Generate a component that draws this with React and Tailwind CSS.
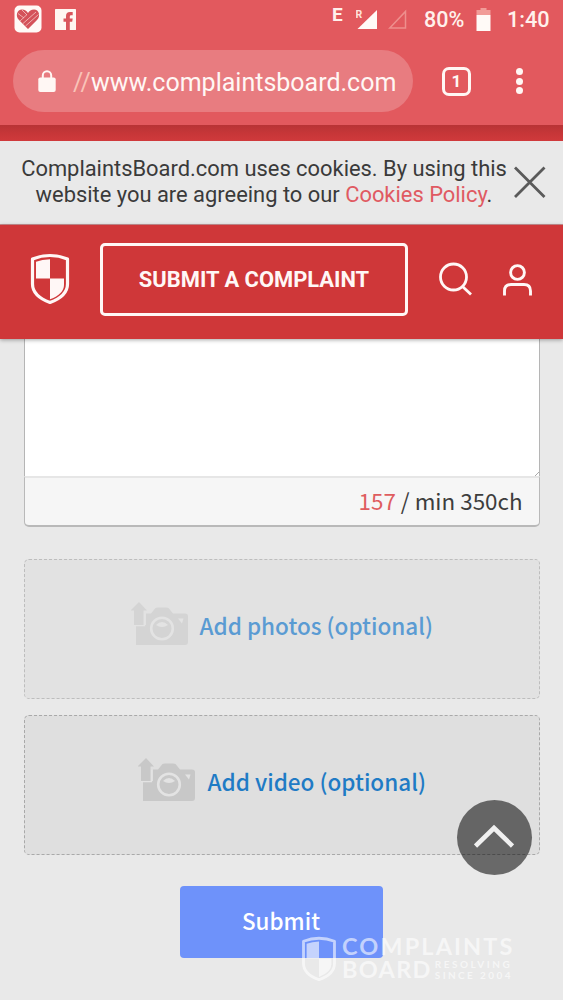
import React from 'react';

const Shield = ({ className }) => (
  <svg className={className} viewBox="0 0 40 52" fill="none">
    <path d="M2.500 6Q20 -1 37.500 6V31Q37.500 43 20 49.500Q2.500 43 2.500 31Z" stroke="currentColor" strokeWidth="3.200" strokeLinejoin="round" />
    <path d="M6 8.800Q12 6.500 20 6.300V25.500H6Z" fill="currentColor" />
    <path d="M20 25.500H34V32Q34 41 20 46.300Z" fill="currentColor" />
  </svg>
);

const StatusBar = () => (
  <div className="flex h-[38px] items-center text-[#fff1ec]">
    <svg className="ml-3.5 h-7 w-7" viewBox="0 0 28 28">
      <rect x="0.5" y="0.5" width="27" height="27" rx="5" fill="#fffaf7" />
      <path d="M14 24L5 15C1 11 3 4.500 8 4.500C11 4.500 12.500 6 14 8C15.500 6 17 4.500 20 4.500C25 4.500 27 11 23 15Z" fill="#d4525a" />
      <path d="M6 16L13 9.500M9 18.500L22 7M11.500 21L24.500 9.500M4 8.500L10 13M8 5L13 10" stroke="#f6c9c6" strokeWidth="0.8" />
    </svg>
    <svg className="ml-[13px] h-[21px] w-[21px]" viewBox="0 0 21 21">
      <rect width="21" height="21" rx="0.6" fill="#fff7f2" />
      <path d="M17 3H15Q11 3 11 7V9.500H8.500V12.700H11V21H14.800V12.700H17.200L17.700 9.500H14.800V7.500Q14.800 6.200 16 6.200H17.700V3Z" fill="#d9555b" />
    </svg>
    <span className="-mt-2.5 ml-[256px] w-[24px] text-[19px] font-bold leading-none">E</span>
    <svg className="h-[22px] w-[22px]" viewBox="0 0 22 22">
      <text x="-0.5" y="9.500" fontSize="10.500" fontWeight="700" fill="#ffe3dc">R</text>
      <path d="M21 2V21H1.500Z" fill="#fffaf7" />
    </svg>
    <svg className="ml-[10px] h-[22px] w-5" viewBox="0 0 20 22">
      <path d="M17.500 3.500V20H1.800Z" fill="none" stroke="#ee8f8d" strokeWidth="1.500" />
    </svg>
    <span className="ml-4 mt-0.5 w-[42px] whitespace-nowrap text-[21.5px] font-medium leading-none">80%</span>
    <svg className="ml-[10px] h-[23px] w-[15px]" viewBox="0 0 15 23">
      <path d="M4.500 0H10.500V2H14.500V7H0.500V2H4.500Z" fill="#f19c98" />
      <rect x="0.5" y="7" width="14" height="16" fill="#fffaf7" />
    </svg>
    <span className="ml-[16px] mt-0.5 whitespace-nowrap text-[21.7px] font-medium leading-none">1:40</span>
  </div>
);

const BrowserBar = () => (
  <div className="flex h-[87px] items-center pb-[1px] text-[#fff7f4]">
    <div className="ml-[13px] flex h-[62px] w-[400px] items-center rounded-full bg-[#e87c80] pl-[25px]">
      <svg className="h-[22px] w-[18px]" viewBox="0 0 18 22">
        <rect x="0.3" y="7.500" width="17.400" height="14.500" rx="2" fill="currentColor" />
        <path d="M4.800 9V5.500A4.200 4.200 0 0 1 13.200 5.500V9" fill="none" stroke="currentColor" strokeWidth="2" />
      </svg>
      <span className="ml-[17px] mt-0.5 whitespace-nowrap text-[25px] leading-none">
        <span className="text-[#f9c3b8]">//</span>www.complaintsboard.com
      </span>
    </div>
    <div className="ml-[29px] flex h-[29px] w-[29px] items-center justify-center rounded-[7px] border-[3px] border-[#fff7f4] text-[17px] font-bold leading-none">
      1
    </div>
    <div className="ml-[44.5px] flex flex-col gap-[2.5px]">
      <span className="h-[7px] w-[7px] rounded-full bg-[#fff7f4]" />
      <span className="h-[7px] w-[7px] rounded-full bg-[#fff7f4]" />
      <span className="h-[7px] w-[7px] rounded-full bg-[#fff7f4]" />
    </div>
  </div>
);

const CookieNotice = () => (
  <div className="flex h-[84px] border-b border-[#c98f91] bg-[#e9e9e9] pt-[15px]">
    <p className="ml-[21px] w-[486px] whitespace-nowrap text-center text-[21.9px] leading-[26px] text-[#3a3a3a]">
      ComplaintsBoard.com uses cookies. By using this
      <br />
      website you are agreeing to our <span className="text-[#e05a62]">Cookies Policy</span>.
    </p>
    <svg className="ml-[7px] mt-[10px] h-8 w-8" viewBox="0 0 32 32">
      <path d="M1 1.500L30.500 31M30.500 1.500L1 31" stroke="#5a5a5a" strokeWidth="2.800" />
    </svg>
  </div>
);

const SiteHeader = () => (
  <header className="relative flex h-[114px] items-start bg-[#cf3739] text-[#fff7f6] shadow-[0_1px_4px_rgba(0,0,0,0.35)]">
    <Shield className="ml-[30px] mt-[28px] h-[52px] w-10" />
    <button className="ml-[30px] mt-[18px] h-[73px] w-[308px] whitespace-nowrap rounded-[5px] border-[3px] border-[#fff7f6] text-[21.9px] font-bold leading-none">
      SUBMIT A COMPLAINT
    </button>
    <svg className="ml-[30px] mt-[36px] h-9 w-9" viewBox="0 0 36 36" fill="none" stroke="currentColor" strokeWidth="2.800">
      <circle cx="15.500" cy="16" r="13" />
      <path d="M24.500 25.500L33 33.500" />
    </svg>
    <svg className="ml-[28px] mt-[38px] h-[34px] w-8" viewBox="0 0 32 34" fill="none" stroke="currentColor" strokeWidth="2.900">
      <circle cx="15.500" cy="9.500" r="6.900" />
      <path d="M2.500 32.500V28Q2.500 21.500 9 21.500H22Q28.500 21.500 28.500 28V32.500" />
    </svg>
  </header>
);

const CameraIcon = () => (
  <svg className="h-[46px] w-[60px]" viewBox="0 0 60 46">
    <path d="M5 22V44H54Q57 44 57 41V15Q57 12.500 54 12.500H42L37.500 7Q37 6.500 35 6.500H27Q25 6.500 24.500 7L20 12.500H15V24H5Z" fill="currentColor" />
    <path d="M8 1L16 9.500H12.500V24H3V9.500H-0.500Z" fill="currentColor" />
    <path d="M3 24.700H13.500V13" fill="none" stroke="#e3e3e3" strokeWidth="1.200" />
    <circle cx="31" cy="27.500" r="10.800" fill="none" stroke="#e3e3e3" strokeWidth="2.600" />
    <path d="M25 24Q31 18 37 24Q31 28 25 24Z" fill="#e3e3e3" />
    <path d="M47 17.500H52.500L51 22.500Z" fill="#e3e3e3" />
  </svg>
);

const UploadBox = ({ label, className, iconClass, textClass }) => (
  <div className={`flex h-[140px] items-center rounded-[5px] border border-dashed ${className}`}>
    <span className={iconClass}>
      <CameraIcon />
    </span>
    <span className={`-mt-[7px] whitespace-nowrap text-[22.5px] font-medium leading-none ${textClass}`}>{label}</span>
  </div>
);

export default function App() {
  return (
    <div className="relative h-[1000px] w-[563px] overflow-hidden bg-[#e9e9e9] font-['Roboto',sans-serif]">
      <div className="h-[125px] bg-[#e2595e]">
        <StatusBar />
        <BrowserBar />
      </div>
      <div className="h-[16px] bg-gradient-to-b from-[#b83335] via-[#c63638] to-[#d03a3c]" />
      <CookieNotice />
      <SiteHeader />

      <main className="ml-[23.5px] w-[516px] font-['Noto_Sans_CJK_SC',sans-serif]">
        <div className="flex h-[137px] items-end justify-end border-x border-[#b5b5b5] bg-white">
          <svg className="h-1 w-1" viewBox="0 0 4 4">
            <path d="M0 4L4 0" stroke="#aaa" />
          </svg>
        </div>
        <div className="flex h-[51px] items-center justify-end rounded-b-[5px] border border-b-2 border-t-2 border-[#b9b9b9] border-t-[#e6e6e6] bg-[#f6f6f6] pb-0.5 pr-4">
          <span className="whitespace-nowrap text-[22.4px] leading-none text-[#3d3d3d]">
            <span className="text-[#df5d5f]">157</span> / min 350ch
          </span>
        </div>

        <UploadBox
          label="Add photos (optional)"
          className="mt-8 border-[#bdbdbd] bg-[#e2e2e2]"
          iconClass="-mt-[10px] ml-[106px] text-[#d4d4d4]"
          textClass="ml-[9px] text-[#5a9bd3]"
        />
        <UploadBox
          label="Add video (optional)"
          className="mt-4 border-[#a9a9a9] bg-[#dfdfdf]"
          iconClass="-mt-[10px] ml-[113px] text-[#c8c8c8]"
          textClass="ml-[10px] text-[#1f7bc5]"
        />

        <button className="ml-[156px] mt-[31px] block h-[72px] w-[203px] rounded-[4px] bg-[#6e92fa] pb-1 text-[22.4px] font-medium leading-none text-white">
          Submit
        </button>
      </main>

      {/* Scroll to top */}
      <button className="absolute left-[456.5px] top-[800px] flex h-[75px] w-[75px] items-center justify-center rounded-full bg-black/55">
        <svg className="-mt-1 h-[24px] w-[40px]" viewBox="0 0 40 24">
          <path d="M1.500 22L20 4L38.500 22" fill="none" stroke="#f0f0f0" strokeWidth="4.600" />
        </svg>
      </button>

      {/* Watermark */}
      <div className="absolute left-[301px] top-[934px] flex items-start font-['Lato',sans-serif] font-bold text-white/60">
        <Shield className="mt-0.5 h-[46px] w-9" />
        <div className="ml-[5px]">
          <div className="whitespace-nowrap text-[23.5px] leading-[24px] tracking-[2.1px]">COMPLAINTS</div>
          <div className="flex">
            <span className="text-[23.5px] leading-[23px] tracking-[1.3px]">BOARD</span>
            <span className="ml-[3px] mt-[1px] whitespace-nowrap text-[10px] leading-[11px]">
              <span className="tracking-[2.5px]">RESOLVING</span>
              <br />
              <span className="tracking-[2.4px]">SINCE 2004</span>
            </span>
          </div>
        </div>
      </div>
    </div>
  );
}
